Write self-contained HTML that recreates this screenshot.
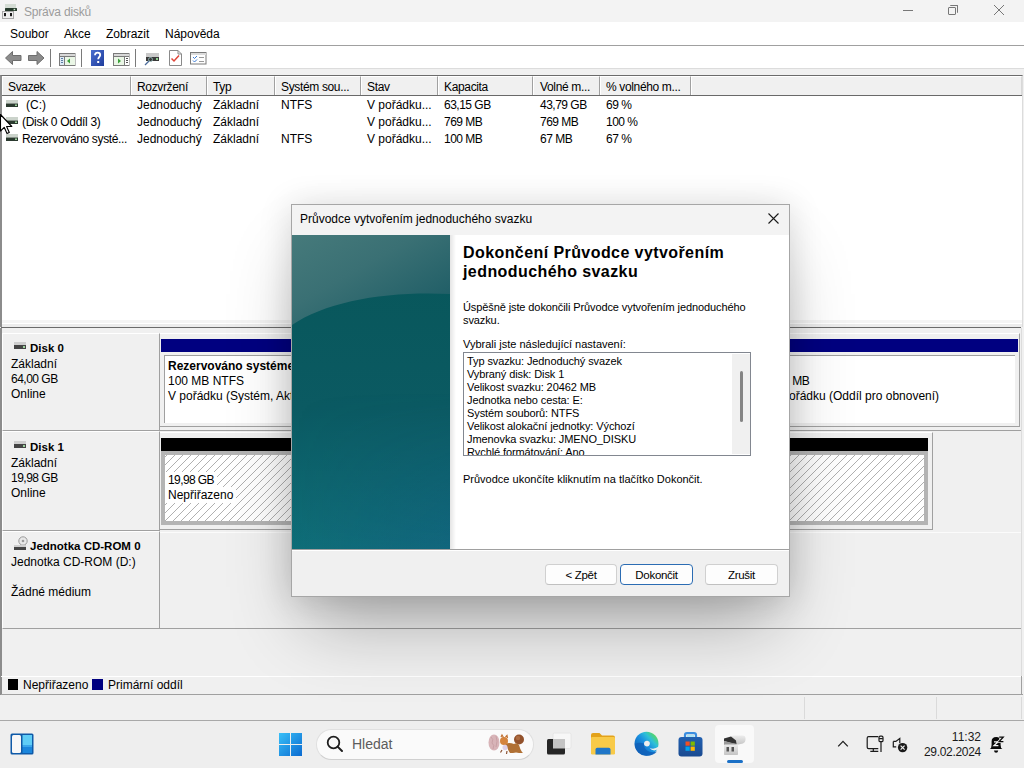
<!DOCTYPE html>
<html><head><meta charset="utf-8">
<style>
*{margin:0;padding:0;box-sizing:border-box}
html,body{width:1024px;height:768px;overflow:hidden;background:#f0f0f0;font-family:"Liberation Sans",sans-serif;font-size:12px;color:#000}
.a{position:absolute}
.t{position:absolute;white-space:nowrap;line-height:14px}
#title{left:0;top:0;width:1024px;height:22px;background:#f3f3f3}
#menu{left:0;top:22px;width:1024px;height:23px;background:#fff}
#menuline{left:0;top:45px;width:1024px;height:1px;background:#a0a0a0}
#tool{left:0;top:46px;width:1024px;height:22px;background:#fff}
#toolline{left:0;top:68px;width:1024px;height:1px;background:#dcdcdc}
#list{left:0;top:75px;width:1023px;height:252px;background:#fff;border-left:2px solid #8c8c8c;border-top:1px solid #6b6b6b;border-right:1px solid #dcdcdc}
.hd{position:absolute;top:76px;height:19px;background:#f0f0f0;border-left:1px solid #fff;border-top:1px solid #fff;border-right:1px solid #a0a0a0}
.hdt{position:absolute;top:80px;white-space:nowrap;line-height:14px;letter-spacing:-0.35px}
#hdline{left:2px;top:95px;width:1020px;height:1px;background:#696969}
.row{position:absolute;white-space:nowrap;line-height:14px}
</style></head><body>
<!-- title bar -->
<div id="title" class="a"></div>
<div class="t" style="left:24px;top:5px;color:#9c9c9c;font-size:12px;letter-spacing:-0.2px">Správa disků</div>
<!-- window controls -->
<div class="a" style="left:903px;top:10px;width:10px;height:1px;background:#777"></div>
<div class="a" style="left:948px;top:7px;width:8px;height:8px;border:1px solid #777;border-radius:1px"></div>
<div class="a" style="left:950px;top:5px;width:8px;height:8px;border-top:1px solid #777;border-right:1px solid #777;border-radius:1px"></div>
<svg class="a" style="left:993px;top:4px" width="12" height="12"><path d="M1 1L11 11M11 1L1 11" stroke="#777" stroke-width="1"/></svg>

<div id="menu" class="a"></div>
<div class="t" style="left:10px;top:27px">Soubor</div>
<div class="t" style="left:64px;top:27px">Akce</div>
<div class="t" style="left:106px;top:27px">Zobrazit</div>
<div class="t" style="left:165px;top:27px">Nápověda</div>
<div id="menuline" class="a"></div>
<div id="tool" class="a"></div>
<div id="toolline" class="a"></div>

<!-- list -->
<div id="list" class="a"></div>
<div class="hd" style="left:2px;width:129px"></div>
<div class="hd" style="left:131px;width:76px"></div>
<div class="hd" style="left:207px;width:68px"></div>
<div class="hd" style="left:275px;width:86px"></div>
<div class="hd" style="left:361px;width:77px"></div>
<div class="hd" style="left:438px;width:95px"></div>
<div class="hd" style="left:533px;width:67px"></div>
<div class="hd" style="left:600px;width:91px"></div>
<div class="hd" style="left:691px;width:331px;border-right:1px solid #d8d8d8"></div>
<div id="hdline" class="a"></div>
<div class="hdt" style="left:8px">Svazek</div>
<div class="hdt" style="left:137px">Rozvržení</div>
<div class="hdt" style="left:213px">Typ</div>
<div class="hdt" style="left:281px">Systém sou...</div>
<div class="hdt" style="left:367px">Stav</div>
<div class="hdt" style="left:444px">Kapacita</div>
<div class="hdt" style="left:540px">Volné m...</div>
<div class="hdt" style="left:606px">% volného m...</div>


<!-- list rows -->
<div class="row" style="left:26px;top:98px">(C:)</div>
<div class="row" style="left:137px;top:98px">Jednoduchý</div>
<div class="row" style="left:213px;top:98px">Základní</div>
<div class="row" style="left:281px;top:98px">NTFS</div>
<div class="row" style="left:367px;top:98px">V pořádku...</div>
<div class="row" style="left:444px;top:98px;letter-spacing:-0.5px">63,15 GB</div>
<div class="row" style="left:540px;top:98px;letter-spacing:-0.5px">43,79 GB</div>
<div class="row" style="left:606px;top:98px;letter-spacing:-0.5px">69 %</div>

<div class="row" style="left:22px;top:115px;letter-spacing:-0.3px">(Disk 0 Oddíl 3)</div>
<div class="row" style="left:137px;top:115px">Jednoduchý</div>
<div class="row" style="left:213px;top:115px">Základní</div>
<div class="row" style="left:367px;top:115px">V pořádku...</div>
<div class="row" style="left:444px;top:115px;letter-spacing:-0.5px">769 MB</div>
<div class="row" style="left:540px;top:115px;letter-spacing:-0.5px">769 MB</div>
<div class="row" style="left:606px;top:115px;letter-spacing:-0.5px">100 %</div>

<div class="row" style="left:22px;top:132px;letter-spacing:-0.35px">Rezervováno systé...</div>
<div class="row" style="left:137px;top:132px">Jednoduchý</div>
<div class="row" style="left:213px;top:132px">Základní</div>
<div class="row" style="left:281px;top:132px">NTFS</div>
<div class="row" style="left:367px;top:132px">V pořádku...</div>
<div class="row" style="left:444px;top:132px;letter-spacing:-0.5px">100 MB</div>
<div class="row" style="left:540px;top:132px;letter-spacing:-0.5px">67 MB</div>
<div class="row" style="left:606px;top:132px;letter-spacing:-0.5px">67 %</div>

<!-- splitter -->
<div class="a" style="left:2px;top:320px;width:1020px;height:7px;background:#ececec;border-top:3px solid #f4f4f4"></div><div class="a" style="left:2px;top:323px;width:1020px;height:1px;background:#fff"></div>
<div class="a" style="left:1px;top:327px;width:1020px;height:1px;background:#6b6b6b"></div>

<!-- graphical area left labels -->
<div class="a" style="left:0;top:328px;width:2px;height:367px;background:#8c8c8c"></div>
<div class="a" style="left:2px;top:333px;width:158px;height:98px;border-right:1px solid #a0a0a0;border-bottom:1px solid #a0a0a0;border-top:1px solid #fff;border-left:1px solid #fff"></div>
<div class="a" style="left:2px;top:431px;width:158px;height:100px;border-right:1px solid #a0a0a0;border-bottom:1px solid #a0a0a0;border-top:1px solid #fff;border-left:1px solid #fff"></div>
<div class="a" style="left:2px;top:531px;width:158px;height:98px;border-right:1px solid #a0a0a0;border-bottom:1px solid #a0a0a0;border-top:1px solid #fff;border-left:1px solid #fff"></div>

<div class="t" style="left:30px;top:341px;font-weight:bold;font-size:11.5px">Disk 0</div>
<div class="t" style="left:11px;top:357px">Základní</div>
<div class="t" style="left:11px;top:372px;letter-spacing:-0.5px">64,00 GB</div>
<div class="t" style="left:11px;top:387px">Online</div>

<div class="t" style="left:30px;top:440px;font-weight:bold;font-size:11.5px">Disk 1</div>
<div class="t" style="left:11px;top:456px">Základní</div>
<div class="t" style="left:11px;top:471px;letter-spacing:-0.5px">19,98 GB</div>
<div class="t" style="left:11px;top:486px">Online</div>

<div class="t" style="left:30px;top:539px;font-weight:bold;font-size:11.5px">Jednotka CD-ROM 0</div>
<div class="t" style="left:11px;top:555px">Jednotka CD-ROM (D:)</div>
<div class="t" style="left:11px;top:585px">Žádné médium</div>

<!-- disk 0 bar -->
<div class="a" style="left:160px;top:430px;width:862px;height:1px;background:#a0a0a0"></div>
<div class="a" style="left:160px;top:333px;width:860px;height:94px;border-top:1px solid #fff;border-right:1px solid #a0a0a0;border-bottom:1px solid #a0a0a0"></div>
<div class="a" style="left:161px;top:339px;width:857px;height:13px;background:#000080"></div>
<div class="a" style="left:164px;top:355px;width:851px;height:68px;background:#fff;border-top:1px solid #a0a0a0;border-left:1px solid #a0a0a0"></div>
<div class="t" style="left:168px;top:359px;font-weight:bold">Rezervováno systémem</div>
<div class="t" style="left:168px;top:374px">100 MB NTFS</div>
<div class="t" style="left:168px;top:389px">V pořádku (Systém, Aktivní, Primární oddíl)</div>
<div class="t" style="left:771px;top:374px;letter-spacing:-0.5px">769 MB</div>
<div class="t" style="left:771px;top:389px">V pořádku (Oddíl pro obnovení)</div>

<!-- disk 1 bar -->
<div class="a" style="left:160px;top:432px;width:773px;height:98px;border-top:1px solid #fff;border-right:1px solid #a0a0a0;border-bottom:1px solid #a0a0a0"></div>
<div class="a" style="left:161px;top:438px;width:767px;height:13px;background:#000"></div>
<svg class="a" style="left:161px;top:451px" width="767" height="74">
<defs><pattern id="hp" patternUnits="userSpaceOnUse" width="8" height="8" x="2" y="0"><path d="M-1 9L9 -1" stroke="#8e8e8e" stroke-width="0.7"/></pattern></defs>
<rect width="767" height="74" fill="#fff"/><rect width="767" height="74" fill="url(#hp)"/>
<rect x="2" y="2" width="763" height="70" fill="none" stroke="#b4b4b4" stroke-width="4"/>
</svg>
<div class="t" style="left:165px;top:472px;background:#fff;padding:1px 3px 1px 3px;letter-spacing:-0.6px">19,98 GB</div>
<div class="t" style="left:165px;top:487px;background:#fff;padding:1px 3px 1px 3px">Nepřiřazeno</div>

<!-- cd row -->
<div class="a" style="left:160px;top:532px;width:862px;height:1px;background:#fbfbfb"></div>
<div class="a" style="left:160px;top:628px;width:862px;height:1px;background:#a0a0a0"></div>

<!-- legend -->
<div class="a" style="left:1px;top:676px;width:1022px;height:19px;border-top:1px solid #fff;border-bottom:1px solid #a0a0a0"></div>
<div class="a" style="left:8px;top:679px;width:10px;height:11px;background:#000"></div>
<div class="t" style="left:23px;top:678px">Nepřiřazeno</div>
<div class="a" style="left:92px;top:679px;width:11px;height:11px;background:#000080"></div>
<div class="t" style="left:108px;top:678px">Primární oddíl</div>

<!-- status bar -->
<div class="a" style="left:0;top:695px;width:1024px;height:26px;background:#f0f0f0;border-bottom:1px solid #a8a8a8"></div>
<div class="a" style="left:804px;top:697px;width:1px;height:22px;background:#dadada"></div>
<div class="a" style="left:936px;top:697px;width:1px;height:22px;background:#dadada"></div>
<div class="a" style="left:1021px;top:697px;width:1px;height:22px;background:#dadada"></div>
<div class="a" style="left:1021px;top:328px;width:1px;height:348px;background:#dcdcdc"></div>
<div class="a" style="left:1021px;top:676px;width:1px;height:19px;background:#a0a0a0"></div>

<!-- taskbar -->
<div class="a" style="left:0;top:721px;width:1024px;height:47px;background:#eeeeee"></div>


<!-- title icon -->
<svg class="a" style="left:0px;top:0px" width="20" height="20">
<rect x="5" y="4" width="11" height="4" fill="#d4dcd4"/>
<rect x="5" y="8" width="12" height="3" rx="0.5" fill="#263a2c"/>
<rect x="13.6" y="8.8" width="1.6" height="1.4" fill="#d0f0d0"/>
<rect x="2.5" y="11.5" width="11" height="7" fill="#eeeeee" stroke="#a8a8a8" stroke-width="1"/>
<rect x="4" y="13" width="2" height="3.2" fill="#1a1a1a"/>
<rect x="10" y="13" width="2" height="3.2" fill="#1a1a1a"/>
</svg>
<!-- toolbar icons -->
<svg class="a" style="left:4px;top:50px" width="42" height="17">
<path d="M1.5 8 L8.5 1.5 V5.5 H17 V10.5 H8.5 V14.5Z" fill="#8c8c8c" stroke="#6e6e6e" stroke-width="1"/>
<path d="M40 8 L33 1.5 V5.5 H24.5 V10.5 H33 V14.5Z" fill="#8c8c8c" stroke="#6e6e6e" stroke-width="1"/>
</svg>
<div class="a" style="left:50px;top:49px;width:1px;height:18px;background:#7a7a7a"></div>
<svg class="a" style="left:59px;top:53px" width="17" height="13">
<rect x="0.5" y="0.5" width="15.5" height="12" fill="#fff" stroke="#7a7a7a"/>
<rect x="1" y="1" width="15" height="2" fill="#d8d8d8"/>
<line x1="1" y1="3.5" x2="16" y2="3.5" stroke="#7a7a7a"/>
<line x1="5.5" y1="4" x2="5.5" y2="12" stroke="#7a7a7a"/>
<rect x="1" y="4" width="4" height="8" fill="#dde9f5"/>
<rect x="2" y="5" width="2" height="1" fill="#5d7fa3"/><rect x="2" y="7" width="2" height="1" fill="#5d7fa3"/><rect x="2" y="9" width="2" height="1" fill="#5d7fa3"/>
<rect x="6" y="4" width="10" height="8" fill="#eaf6e6"/>
<path d="M11 5.5 L8 8 L11 10.5Z" fill="#3aa23a"/>
</svg>
<div class="a" style="left:81px;top:49px;width:1px;height:18px;background:#7a7a7a"></div>
<svg class="a" style="left:91px;top:50px" width="13" height="16">
<defs><linearGradient id="hb" x1="0" y1="0" x2="1" y2="1"><stop offset="0" stop-color="#4a6fd0"/><stop offset="1" stop-color="#1f3c9c"/></linearGradient></defs>
<rect x="0" y="0" width="13" height="16" fill="url(#hb)"/>
<path d="M4 5.2C4 3.5 5.2 2.6 6.6 2.6C8 2.6 9.2 3.5 9.2 5C9.2 6.8 7.2 7 7.2 9.3" fill="none" stroke="#fff" stroke-width="1.8"/>
<rect x="6.2" y="11" width="2" height="2" fill="#fff"/>
</svg>
<svg class="a" style="left:113px;top:53px" width="17" height="13">
<rect x="0.5" y="0.5" width="15.5" height="12" fill="#fff" stroke="#7a7a7a"/>
<rect x="1" y="1" width="15" height="2" fill="#d8d8d8"/>
<line x1="1" y1="3.5" x2="16" y2="3.5" stroke="#7a7a7a"/>
<line x1="11.5" y1="4" x2="11.5" y2="12" stroke="#7a7a7a"/>
<rect x="1" y="4" width="10" height="8" fill="#eaf6e6"/>
<rect x="12" y="4" width="4" height="8" fill="#fff"/>
<rect x="13" y="5" width="2" height="1" fill="#555"/><rect x="13" y="7" width="2" height="1" fill="#555"/><rect x="13" y="9" width="2" height="1" fill="#555"/>
<path d="M5 5.5 L8 8 L5 10.5Z" fill="#3aa23a"/>
</svg>
<div class="a" style="left:135px;top:49px;width:1px;height:18px;background:#7a7a7a"></div>
<svg class="a" style="left:144px;top:52px" width="16" height="14">
<rect x="2" y="1" width="13" height="4" fill="#c9c9c9"/>
<rect x="2" y="5" width="13" height="4" fill="#3a3a3a"/>
<rect x="12" y="6" width="2" height="2" fill="#8fd08f"/>
<path d="M1 13 L5 9" stroke="#4a6a9a" stroke-width="1.3"/>
<circle cx="6.5" cy="7.5" r="2" fill="none" stroke="#8aa" stroke-width="1"/>
</svg>
<svg class="a" style="left:169px;top:50px" width="13" height="16">
<path d="M0.5 0.5H9L12.5 4V15.5H0.5Z" fill="#fff" stroke="#8a8a8a"/>
<path d="M9 0.5V4H12.5" fill="none" stroke="#8a8a8a"/>
<path d="M2.5 8.5L5 11L10 5.5" fill="none" stroke="#e0463a" stroke-width="1.5"/>
</svg>
<svg class="a" style="left:190px;top:52px" width="17" height="13">
<rect x="0.5" y="0.5" width="15.5" height="11.5" fill="#fff" stroke="#7a7a7a"/>
<rect x="1" y="1" width="15" height="2" fill="#dcdcdc"/>
<path d="M3 5L4.5 6.5L7 4M3 8.5L4.5 10L7 7.5" fill="none" stroke="#3a7bd5" stroke-width="1"/>
<rect x="9" y="5" width="5" height="1" fill="#999"/><rect x="9" y="9" width="5" height="1" fill="#999"/>
</svg>

<!-- list row icons -->
<svg class="a" style="left:5px;top:100px" width="14" height="42">
<g id="dk"><rect x="1" y="0" width="12" height="3.5" fill="#cbd3cb"/><rect x="1" y="3.5" width="12" height="3.5" fill="#2b3a2f"/><rect x="10" y="4.5" width="2" height="1.5" fill="#9ed29e"/></g>
<use href="#dk" y="17"/><use href="#dk" y="34"/>
</svg>
<!-- disk label icons -->
<svg class="a" style="left:14px;top:342px" width="14" height="8"><rect x="0" y="0" width="12" height="3" fill="#cfcfcf"/><rect x="0" y="3" width="12" height="4" fill="#454545"/><rect x="9" y="4" width="2" height="2" fill="#9ed29e"/></svg>
<svg class="a" style="left:14px;top:441px" width="14" height="8"><rect x="0" y="0" width="12" height="3" fill="#cfcfcf"/><rect x="0" y="3" width="12" height="4" fill="#454545"/><rect x="9" y="4" width="2" height="2" fill="#9ed29e"/></svg>
<svg class="a" style="left:13px;top:536px" width="15" height="15"><circle cx="10" cy="5" r="4.2" fill="#e8e8e8" stroke="#9a9a9a"/><circle cx="10" cy="5" r="1.3" fill="#9a9a9a"/><rect x="1" y="9" width="12" height="3" fill="#cfcfcf"/><rect x="1" y="11" width="12" height="3" fill="#454545"/></svg>

<!-- cursor -->
<svg class="a" style="left:0px;top:114px" width="14" height="21">
<path d="M0.5 0.5 V17 L4.2 13.3 L7 19.5 L9.3 18.5 L6.6 12.5 H11.8Z" fill="#fff" stroke="#000" stroke-width="1.1" stroke-linejoin="round"/>
</svg>


<!-- taskbar icons -->
<svg class="a" style="left:10px;top:733px" width="25" height="23">
<rect x="0.5" y="0.5" width="23" height="21" rx="1.5" fill="#0f5aa8"/>
<rect x="2" y="2" width="9" height="18" rx="1.5" fill="#f7f7f7"/>
<rect x="12.5" y="2" width="9.5" height="10" fill="#5fcdf6"/>
<rect x="12.5" y="12" width="9.5" height="2" fill="#3aa6ea"/>
<rect x="12.5" y="14" width="9.5" height="6" fill="#1b86dc"/>
</svg>
<svg class="a" style="left:279px;top:733px" width="24" height="24">
<defs><linearGradient id="wl" gradientUnits="userSpaceOnUse" x1="0" y1="0" x2="23" y2="23"><stop offset="0" stop-color="#39c0f8"/><stop offset="1" stop-color="#0b6ad0"/></linearGradient></defs>
<path d="M0 0H11V11H0ZM12 0H23V11H12ZM0 12H11V23H0ZM12 12H23V23H12Z" fill="url(#wl)"/>
</svg>
<div class="a" style="left:316px;top:729px;width:218px;height:31px;border-radius:16px;background:#fafafa;border:1px solid #e0e0e0;border-bottom-color:#d0d0d0"></div>
<svg class="a" style="left:326px;top:735px" width="18" height="18">
<circle cx="7.5" cy="7.5" r="5.8" fill="none" stroke="#1f1f1f" stroke-width="1.8"/>
<path d="M11.6 11.6L16 16" stroke="#1f1f1f" stroke-width="2" stroke-linecap="round"/>
</svg>
<div class="t" style="left:352px;top:736px;font-size:14px;line-height:16px;color:#5c5c5c">Hledat</div>
<svg class="a" style="left:486px;top:733px" width="42" height="22">
<ellipse cx="8" cy="9.5" rx="5.5" ry="8" fill="#d8b4b8"/>
<path d="M5 4Q8 6 6 10Q9 12 7 16M10 3Q12 8 10 14" stroke="#c49aa0" stroke-width="0.8" fill="none"/>
<circle cx="33" cy="6.5" r="5" fill="#93522c"/>
<circle cx="32" cy="5" r="2.2" fill="#b8774a" opacity="0.7"/>
<path d="M19 11Q23 9 28 11Q31 9 33 12Q34 16 36 19L37 20H33Q30 19 27 20L24 20Q22 17 21 14Z" fill="#b07034"/>
<ellipse cx="18" cy="8" rx="4" ry="4" fill="#d4843e"/>
<path d="M15 4L16 2L17.5 4.5M19.5 4L21 2.5L21.5 5" stroke="#c07030" stroke-width="1.2" fill="none"/>
<ellipse cx="19" cy="14.5" rx="2.5" ry="2.8" fill="#ddd0e8"/>
<path d="M16 17L14.5 19.5M21 18L20.5 21" stroke="#8a5030" stroke-width="1.2"/>
</svg>
<svg class="a" style="left:546px;top:732px" width="27" height="24">
<rect x="7" y="1" width="18" height="15.5" rx="1.5" fill="#f7f7f7" stroke="#e2e2e2" stroke-width="0.8"/>
<rect x="1" y="7" width="18" height="15.5" rx="1.5" fill="#262626"/>
<rect x="7" y="7" width="12" height="9.5" fill="#c4c4c4"/>
</svg>
<svg class="a" style="left:590px;top:732px" width="26" height="24">
<path d="M1 3Q1 1 3 1H9.5L12 3.5H23Q25 3.5 25 5.5V8H1Z" fill="#e3a21a"/>
<rect x="1" y="5" width="24" height="17.5" rx="1.2" fill="#f8ca48"/>
<path d="M5.5 22.5V17.5Q5.5 15.8 7.2 15.8H18.8Q20.5 15.8 20.5 17.5V22.5Z" fill="#1f76c8"/>
</svg>
<svg class="a" style="left:634px;top:731px" width="26" height="26">
<defs><linearGradient id="eg" x1="0.1" y1="0.9" x2="0.9" y2="0.15"><stop offset="0" stop-color="#0c59b0"/><stop offset="0.5" stop-color="#1a8fe0"/><stop offset="0.75" stop-color="#2fc0d8"/><stop offset="1" stop-color="#56d85e"/></linearGradient></defs>
<circle cx="12.5" cy="12.8" r="12" fill="url(#eg)"/>
<path d="M0.8 13 Q1.5 23 12 24.8 Q19 25 23 20.5 Q17 22.5 13 19.5 Q9.5 16.5 10 12.5 Q5 11 0.8 13Z" fill="#1160b8" opacity="0.85"/>
<path d="M10 12.6 Q10.3 9.6 13.3 9.8 Q16.2 10.3 15.8 13.2 Q15.3 15.6 12.8 15.5 Q10 15.2 10 12.6Z" fill="#eeeeee"/>
<path d="M24.8 15.5 Q20 19 15.5 16.8 Q18.5 20.8 23.6 18.6Z" fill="#eeeeee"/>
</svg>
<svg class="a" style="left:678px;top:732px" width="25" height="25">
<defs><linearGradient id="sg" x1="0" y1="0" x2="0" y2="1"><stop offset="0" stop-color="#2160b0"/><stop offset="1" stop-color="#1a4a90"/></linearGradient></defs>
<path d="M7 6V3Q7 1.2 9 1.2H16Q18 1.2 18 3V6" fill="none" stroke="#3a8ee0" stroke-width="2.2"/>
<path d="M9 4H16" stroke="#7fe0fa" stroke-width="1.2"/>
<rect x="0.5" y="5" width="24" height="19.5" rx="3" fill="url(#sg)"/>
<rect x="7.5" y="9.5" width="4.2" height="4.2" fill="#f25022"/><rect x="12.6" y="9.5" width="4.2" height="4.2" fill="#7fba00"/>
<rect x="7.5" y="14.6" width="4.2" height="4.2" fill="#00a4ef"/><rect x="12.6" y="14.6" width="4.2" height="4.2" fill="#ffb900"/>
</svg>
<div class="a" style="left:715px;top:725px;width:39px;height:38px;border-radius:4px;background:#f9f9f9"></div>
<svg class="a" style="left:722px;top:734px" width="25" height="22">
<defs><linearGradient id="dg" x1="0" y1="0" x2="0" y2="1"><stop offset="0" stop-color="#ececec"/><stop offset="1" stop-color="#c4c4c4"/></linearGradient></defs>
<path d="M9 2.5Q10 1.5 12 1.5H20.5Q23.5 1.5 23.5 4.5V6Q23.5 8.5 21 9.5L14 11H8Z" fill="url(#dg)"/>
<path d="M2 4.5L9 2.5L14 6.5L14.5 10L9 9L2 7Z" fill="#333"/>
<path d="M2 7L14.5 10V11.5L9 11H2Z" fill="#9a9a9a"/>
<rect x="2" y="10.5" width="14" height="10.5" rx="0.8" fill="url(#dg)"/>
<rect x="4.5" y="13" width="2.5" height="4.5" fill="#555"/><rect x="9.5" y="13" width="2.5" height="4.5" fill="#555"/>
</svg>
<div class="a" style="left:727px;top:760px;width:16px;height:3px;border-radius:2px;background:#1b70c6"></div>
<svg class="a" style="left:836px;top:739px" width="14" height="10"><path d="M2.2 7.4L7 2.4L11.8 7.4" fill="none" stroke="#1f1f1f" stroke-width="1.3"/></svg>
<svg class="a" style="left:866px;top:735px" width="19" height="19">
<path d="M12.3 1.7 H2.6 Q1.2 1.7 1.2 3.1 V12.3 Q1.2 13.7 2.6 13.7 H12.3" fill="none" stroke="#1a1a1a" stroke-width="1.2"/>
<path d="M7.3 13.7 V16 M4.3 16.3 H12.3" fill="none" stroke="#1a1a1a" stroke-width="1.2"/>
<rect x="13" y="1.1" width="4" height="5.6" rx="1.3" fill="none" stroke="#1a1a1a" stroke-width="1.2"/>
<path d="M13.2 3.7H16.8M15 6.7V17" stroke="#1a1a1a" stroke-width="1.2"/>
</svg>
<svg class="a" style="left:892px;top:737px" width="17" height="17">
<path d="M1.3 4.4 H3.8 L7.8 1.4 V6.2 M1.3 4.4 V9.8 H4.2" fill="none" stroke="#1a1a1a" stroke-width="1.2"/>
<circle cx="10.6" cy="10.6" r="4.7" fill="#1a1a1a"/>
<path d="M8.6 8.6L12.6 12.6M12.6 8.6L8.6 12.6" stroke="#f0f0f0" stroke-width="1.2"/>
</svg>
<div class="t" style="left:900px;top:730px;width:81px;text-align:right;font-size:12px;color:#1a1a1a">11:32</div>
<div class="t" style="left:900px;top:745px;width:81px;text-align:right;font-size:12px;color:#1a1a1a;letter-spacing:-0.3px">29.02.2024</div>
<svg class="a" style="left:988px;top:735px" width="17" height="19">
<path d="M1.8 14 Q3.6 13 3.6 10 V6.5 Q3.6 2 8.2 2 Q12.6 2 12.6 6.5 V10 Q12.6 13 14.4 14 Z" fill="#0a0a0a"/>
<path d="M6 15.6 H10.2 Q10 17.8 8.1 17.8 Q6.2 17.8 6 15.6Z" fill="#0a0a0a"/>
<path d="M6 6.8 H10.2 L6 10.6 H10.4" fill="none" stroke="#f4f4f4" stroke-width="1.3"/>
<path d="M11.2 2.2 H15.2 L11.2 6.6 H15.4" fill="none" stroke="#eeeeee" stroke-width="3"/>
<path d="M11.2 2.2 H15.2 L11.2 6.6 H15.4" fill="none" stroke="#0a0a0a" stroke-width="1.3"/>
</svg>

<!-- dialog -->
<div class="a" style="left:291px;top:204px;width:499px;height:393px;box-shadow:0 2px 32px rgba(0,0,0,0.14),0 40px 70px -15px rgba(0,0,0,0.3)"></div>
<div class="a" style="left:291px;top:204px;width:499px;height:393px;background:#f0f0f0;border:1px solid #a6a6a6"></div>
<div class="a" style="left:292px;top:205px;width:497px;height:30px;background:#f3f3f3"></div>
<div class="t" style="left:300px;top:212px">Průvodce vytvořením jednoduchého svazku</div>
<svg class="a" style="left:767px;top:212px" width="13" height="13"><path d="M1.5 1.5L11.5 11.5M11.5 1.5L1.5 11.5" stroke="#1a1a1a" stroke-width="1.1"/></svg>
<div class="a" style="left:292px;top:235px;width:497px;height:314px;background:#fff"></div>
<svg class="a" style="left:292px;top:235px" width="158" height="314">
<defs>
<linearGradient id="g1" x1="0" y1="0" x2="1" y2="1"><stop offset="0" stop-color="#467a7b"/><stop offset="0.4" stop-color="#3a7074"/><stop offset="1" stop-color="#175862"/></linearGradient>
<linearGradient id="g2" x1="0" y1="0" x2="0" y2="1"><stop offset="0" stop-color="#075659"/><stop offset="0.55" stop-color="#0b5a62"/><stop offset="1" stop-color="#0f6e78"/></linearGradient>
<linearGradient id="g3" x1="0" y1="0" x2="1" y2="0"><stop offset="0" stop-color="#1a4a90" stop-opacity="0"/><stop offset="1" stop-color="#1a4a90" stop-opacity="0.22"/></linearGradient>
<linearGradient id="g4" x1="0" y1="0" x2="0" y2="1"><stop offset="0" stop-color="#fff" stop-opacity="0"/><stop offset="0.5" stop-color="#fff" stop-opacity="0"/><stop offset="1" stop-color="#fff" stop-opacity="1"/></linearGradient>
<mask id="m4"><rect width="158" height="314" fill="url(#g4)"/></mask>
</defs>
<rect width="158" height="314" fill="url(#g2)"/><rect width="158" height="314" fill="url(#g3)" mask="url(#m4)"/>
<path d="M0 0H158V59C95 56 35 66 0 90Z" fill="url(#g1)"/>
</svg>
<div class="a" style="left:450px;top:235px;width:6px;height:314px;background:linear-gradient(90deg,#e4e4e4,#fff)"></div>
<div class="t" style="left:463px;top:243px;font-weight:bold;font-size:16px;letter-spacing:0.42px;line-height:19px">Dokončení Průvodce vytvořením<br>jednoduchého svazku</div>
<div class="t" style="left:463px;top:301px;font-size:11px;line-height:13px;letter-spacing:-0.1px">Úspěšně jste dokončili Průvodce vytvořením jednoduchého<br>svazku.</div>
<div class="t" style="left:463px;top:338px;font-size:11px;line-height:13px">Vybrali jste následující nastavení:</div>
<div class="a" style="left:463px;top:352px;width:288px;height:104px;border:1px solid #828790;background:#fff;overflow:hidden">
 <div class="t" style="left:3px;top:2px;font-size:11px;line-height:13px;letter-spacing:-0.1px">Typ svazku: Jednoduchý svazek<br>Vybraný disk: Disk 1<br>Velikost svazku: 20462 MB<br>Jednotka nebo cesta: E:<br>Systém souborů: NTFS<br>Velikost alokační jednotky: Výchozí<br>Jmenovka svazku: JMENO_DISKU<br>Rychlé formátování: Ano</div>
 <div class="a" style="left:268px;top:1px;width:18px;height:100px;background:#f0f0f0"></div>
 <div class="a" style="left:276px;top:18px;width:3px;height:51px;background:#858585;border-radius:2px"></div>
</div>
<div class="t" style="left:463px;top:473px;font-size:11px;line-height:13px">Průvodce ukončíte kliknutím na tlačítko Dokončit.</div>
<div class="a" style="left:292px;top:549px;width:497px;height:1px;background:#a0a0a0"></div>
<div class="a" style="left:292px;top:550px;width:497px;height:1px;background:#fff"></div>
<div class="a" style="left:545px;top:564px;width:72px;height:21px;background:#fdfdfd;border:1px solid #d0d0d0;border-bottom-color:#c0c0c0;border-radius:4px"></div>
<div class="t" style="left:545px;top:568px;width:72px;text-align:center;font-size:11.5px;letter-spacing:-0.3px">&lt; Zpět</div>
<div class="a" style="left:620px;top:564px;width:73px;height:21px;background:#fdfdfd;border:1px solid #2b6cb3;border-radius:4px"></div>
<div class="t" style="left:620px;top:568px;width:73px;text-align:center;font-size:11.5px;letter-spacing:-0.3px">Dokončit</div>
<div class="a" style="left:705px;top:564px;width:73px;height:21px;background:#fdfdfd;border:1px solid #d0d0d0;border-bottom-color:#c0c0c0;border-radius:4px"></div>
<div class="t" style="left:705px;top:568px;width:73px;text-align:center;font-size:11.5px;letter-spacing:-0.3px">Zrušit</div>
</body></html>
